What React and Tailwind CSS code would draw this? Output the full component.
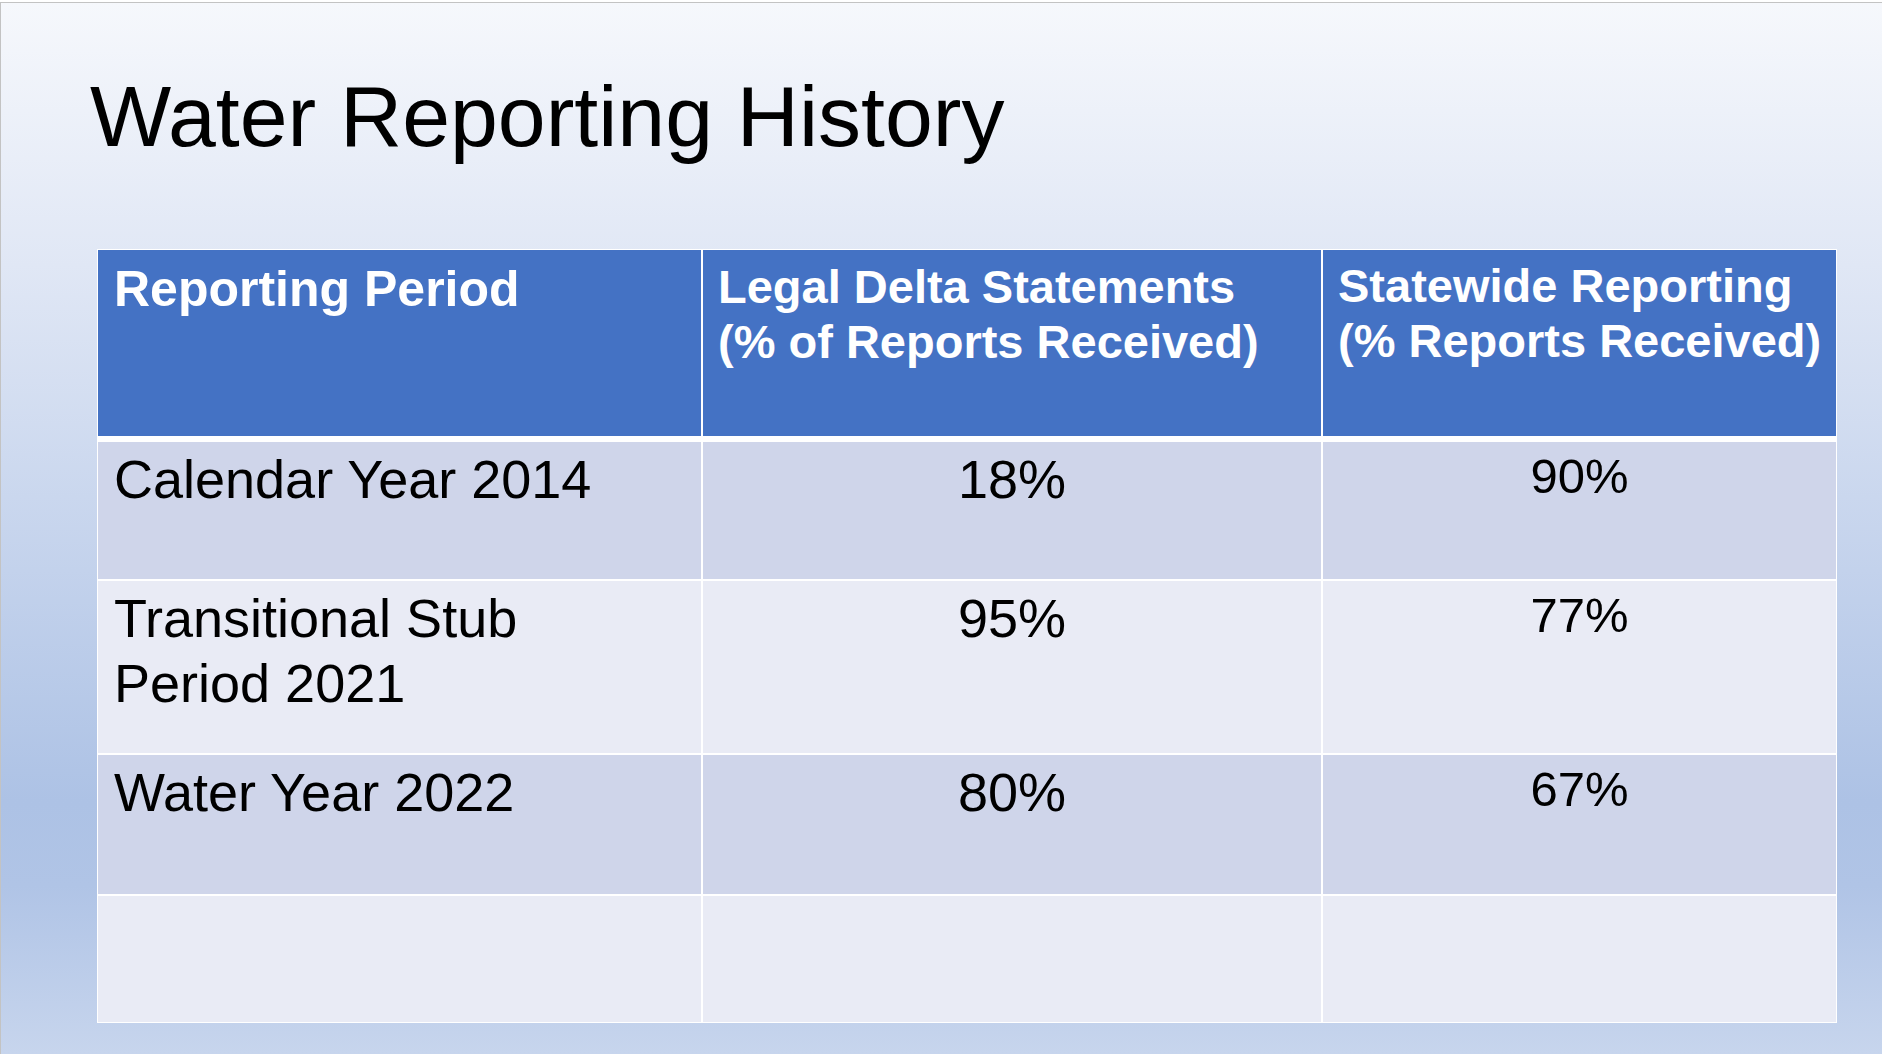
import React from "react";

const rows = [
  { period: ["Calendar Year 2014"], delta: "18%", state: "90%", tone: "bg-[#cfd5ea]", h: "h-[137px]" },
  { period: ["Transitional Stub", "Period 2021"], delta: "95%", state: "77%", tone: "bg-[#e9ebf5]", h: "h-[172px]" },
  { period: ["Water Year 2022"], delta: "80%", state: "67%", tone: "bg-[#cfd5ea]", h: "h-[139px]" },
  { period: [], delta: "", state: "", tone: "bg-[#e9ebf5]", h: "h-[126px]" },
];

export default function App() {
  return (
    <div className="w-[1882px] h-[1058px] bg-white pt-[2px] font-['Liberation_Sans',Arial,sans-serif] overflow-hidden">
      <div className="h-[1052px] border-t border-l border-[#c3c3c3] bg-[linear-gradient(180deg,#f6f8fc_0%,#e0e7f5_25%,#adc2e5_76%,#b0c4e6_84%,#c7d5ed_100%)]">
        <h1 className="pl-[89px] pt-[70px] text-[86px] leading-[86px] text-black whitespace-nowrap">
          Water Reporting History
        </h1>

        <div className="ml-[96px] mt-[90px] w-[1740px] bg-white p-[1px] flex flex-col">
          {/* header */}
          <div className="grid grid-cols-[603px_618px_513px] gap-x-[2px] h-[186px]">
            <div className="bg-[#4472c4] pl-[16px] pt-[12px] text-white font-bold text-[50px] leading-[55px] whitespace-nowrap">
              Reporting Period
            </div>
            <div className="bg-[#4472c4] pl-[15px] pt-[9px] text-white font-bold text-[47px] leading-[55px] whitespace-nowrap">
              Legal Delta Statements
              <br />
              (% of Reports Received)
            </div>
            <div className="bg-[#4472c4] pl-[15px] pt-[8px] text-white font-bold text-[47px] leading-[55px] whitespace-nowrap">
              Statewide Reporting
              <br />
              (% Reports Received)
            </div>
          </div>

          <div className="flex flex-col gap-y-[2px] mt-[6px]">
            {rows.map((r, i) => (
              <div key={i} className={`grid grid-cols-[603px_618px_513px] gap-x-[2px] ${r.h}`}>
                <div className={`${r.tone} pl-[16px] pt-[5px] text-black text-[54px] leading-[65px] whitespace-nowrap`}>
                  {r.period.map((line, j) => (
                    <div key={j}>{line}</div>
                  ))}
                </div>
                <div className={`${r.tone} pt-[5px] text-center text-black text-[54px] leading-[65px]`}>
                  {r.delta}
                </div>
                <div className={`${r.tone} pt-[5px] text-center text-black text-[49px] leading-[59px]`}>
                  {r.state}
                </div>
              </div>
            ))}
          </div>
        </div>
      </div>
    </div>
  );
}
